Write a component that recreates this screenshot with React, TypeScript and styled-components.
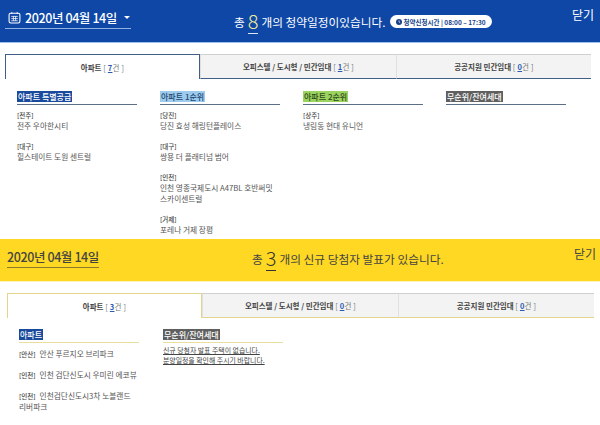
import React from "react";
import styled, { createGlobalStyle } from "styled-components";

const Global = createGlobalStyle`
  html, body { margin: 0; padding: 0; background: #fff; }
  body { font-family: "Noto Sans CJK KR", "Noto Sans", sans-serif; width: 600px; height: 425px; overflow: hidden; }
`;

const Section = styled.section<{ $h: number; $pad: number }>`
  height: ${p => p.$h}px;
  padding-left: ${p => p.$pad}px;
  box-sizing: border-box;
  overflow: hidden;
`;

const Banner = styled.header<{ $bg: string; $fg: string; $h: number; $m: number; $line: string }>`
  height: ${p => p.$h}px;
  margin-left: ${p => -p.$m}px;
  padding-left: ${p => p.$m}px;
  background: ${p => p.$bg};
  color: ${p => p.$fg};
  border-bottom: 1px solid ${p => p.$line};
  display: flex;
  align-items: flex-start;
  position: relative;
  box-sizing: border-box;
`;

const DateBox = styled.div<{ $w: number; $top: number; $line: string; $size: number }>`
  width: ${p => p.$w}px;
  height: 22px;
  margin-top: ${p => p.$top}px;
  border-bottom: 1px solid ${p => p.$line};
  display: flex;
  align-items: center;
  font-size: ${p => p.$size}px;
  font-weight: 500;
  letter-spacing: -0.4px;
  white-space: nowrap;
  box-sizing: border-box;
`;

const IconSlot = styled.span`
  display: flex;
  margin: 0 4px 0 3px;
`;

const Caret = styled.span`
  width: 0;
  height: 0;
  margin-left: 7px;
  border-left: 3px solid transparent;
  border-right: 3px solid transparent;
  border-top: 3px solid #fff;
`;

const Summary = styled.div<{ $left: number; $top: number; $size: number }>`
  margin-left: ${p => p.$left}px;
  margin-top: ${p => p.$top}px;
  display: flex;
  align-items: center;
  font-size: ${p => p.$size}px;
  white-space: nowrap;
`;

const Count = styled.span<{ $color: string; $line: string }>`
  font-size: 20px;
  line-height: 24px;
  font-weight: 300;
  color: ${p => p.$color};
  margin: 0 3px;
  border-bottom: 1px solid ${p => p.$line};
  height: 24px;
`;

const Hours = styled.span`
  margin-left: 4px;
  height: 13px;
  width: 102px;
  border-radius: 7px;
  background: #fff;
  color: #173f8a;
  font-size: 6.5px;
  font-weight: 700;
  display: flex;
  align-items: center;
  justify-content: center;
  gap: 2px;
`;

const Close = styled.span<{ $top: number; $right: number }>`
  position: absolute;
  top: ${p => p.$top}px;
  right: ${p => p.$right}px;
  font-size: 12px;
  line-height: 16px;
`;

const TabBar = styled.nav<{ $top: number; $w: number }>`
  margin-top: ${p => p.$top}px;
  width: ${p => p.$w}px;
  height: 25px;
  display: flex;
`;

const Tab = styled.div<{ $active?: boolean; $line: string; $w: number }>`
  width: ${p => p.$w}px;
  box-sizing: border-box;
  display: flex;
  align-items: center;
  justify-content: center;
  font-size: 7.5px;
  font-weight: 700;
  color: #444;
  background: ${p => (p.$active ? "#fff" : "#f3f3f3")};
  border-top: 1px solid ${p => (p.$active ? p.$line : "#cfcfcf")};
  border-left: 1px solid ${p => (p.$active ? p.$line : "#e0e0e0")};
  border-right: ${p => (p.$active ? `1px solid ${p.$line}` : "none")};
  border-bottom: ${p => (p.$active ? "none" : `1px solid ${p.$line}`)};
  white-space: pre;
`;

const Bracket = styled.span`
  font-weight: 400;
  color: #777;
  letter-spacing: 0.2px;
`;

const Num = styled.span`
  color: #2a5bb0;
  font-weight: 700;
  text-decoration: underline;
`;

const Columns = styled.div<{ $left: number; $top: number; $gap: number }>`
  display: flex;
  gap: ${p => p.$gap}px;
  margin-left: ${p => p.$left}px;
  margin-top: ${p => p.$top}px;
`;

const Column = styled.div`
  width: 120px;
`;

const TitleRow = styled.div<{ $line: string }>`
  display: flex;
  padding-bottom: 2px;
  border-bottom: 1px solid ${p => p.$line};
`;

const Badge = styled.span<{ $bg: string; $fg: string }>`
  height: 11px;
  line-height: 11px;
  padding: 0 1px;
  font-size: 8px;
  font-weight: 500;
  background: ${p => p.$bg};
  color: ${p => p.$fg};
  white-space: nowrap;
`;

const List = styled.div<{ $top: number; $gap: number }>`
  margin-top: ${p => p.$top}px;
  display: flex;
  flex-direction: column;
  gap: ${p => p.$gap}px;
`;

const Entry = styled.div`
  font-size: 7.7px;
  line-height: 11px;
  color: #555;
  word-break: keep-all;
`;

const Region = styled.div`
  font-size: 6.5px;
  line-height: 10px;
  font-weight: 500;
  color: #444;
`;

const InlineRegion = styled.span`
  font-size: 6.5px;
  line-height: 1;
  font-weight: 500;
  color: #444;
  margin-right: 4px;
`;

const Notice = styled.div`
  margin-top: 2px;
  font-size: 6.9px;
  line-height: 10px;
  color: #444;
  text-decoration: underline;
  white-space: nowrap;
`;

const CalendarIcon = () => (
  <svg width="13" height="13" viewBox="0 0 12 12" fill="none" stroke="#fff" strokeWidth="1">
    <rect x="1" y="2" width="10" height="9" rx="1.5" />
    <path d="M3.5 0.8v2M8.5 0.8v2M3 5h6M3 7h6M3 9h6M5 5v4M7 5v4" strokeWidth="0.7" />
  </svg>
);

const ClockIcon = () => (
  <svg width="6" height="6" viewBox="0 0 6 6">
    <circle cx="3" cy="3" r="3" fill="#173f8a" />
    <path d="M3 1.4V3l1.2.6" stroke="#fff" strokeWidth="0.7" fill="none" />
  </svg>
);

const TabLabel = ({ label, n }: { label: string; n: number }) => (
  <span>
    {label} <Bracket>[ <Num>{n}</Num>건 ]</Bracket>
  </span>
);

const places: [string, string[]][][] = [
  [["전주", ["전주 우아한시티"]], ["대구", ["힐스테이트 도원 센트럴"]]],
  [
    ["당진", ["당진 효성 해링턴플레이스"]],
    ["대구", ["쌍용 더 플래티넘 범어"]],
    ["인천", ["인천 영종국제도시 A47BL 호반써밋", "스카이센트럴"]],
    ["거제", ["포레나 거제 장평"]],
  ],
  [["상주", ["냉림동 현대 유니언"]]],
  [],
];

const blueTitles: [string, string, string][] = [
  ["아파트 특별공급", "#1a4a9c", "#fff"],
  ["아파트 1순위", "#9ccbee", "#23466e"],
  ["아파트 2순위", "#9bd35f", "#2f4a1a"],
  ["무순위/잔여세대", "#5f5f5f", "#fff"],
];

export default function App() {
  return (
    <>
      <Global />
      <Section $h={239} $pad={5}>
        <Banner $bg="#0e47a6" $fg="#fff" $h={43} $m={5} $line="#9cc0ee">
          <DateBox $w={126} $top={7} $line="#8fb0e0" $size={12.5}>
            <IconSlot><CalendarIcon /></IconSlot>
            2020년 04월 14일
            <Caret />
          </DateBox>
          <Summary $left={103} $top={9} $size={11.7}>
            총<Count $color="#ecec96" $line="#dfe6f2">8</Count>개의 청약일정이있습니다.
            <Hours><ClockIcon />청약신청시간 | 08:00 – 17:30</Hours>
          </Summary>
          <Close $top={7} $right={6}>닫기</Close>
        </Banner>
        <TabBar $top={11} $w={586}>
          <Tab $active $line="#3f5f85" $w={195}><TabLabel label="아파트" n={7} /></Tab>
          <Tab $line="#3f5f85" $w={196}><TabLabel label="오피스텔 / 도시형 / 민간임대" n={1} /></Tab>
          <Tab $line="#3f5f85" $w={195}><TabLabel label="공공지원 민간임대" n={0} /></Tab>
        </TabBar>
        <Columns $left={12} $top={12} $gap={23}>
          {blueTitles.map(([t, bg, fg], i) => (
            <Column key={t}>
              <TitleRow $line="#5a6f85"><Badge $bg={bg} $fg={fg}>{t}</Badge></TitleRow>
              <List $top={5} $gap={10}>
                {places[i].map(([r, names]) => (
                  <Entry key={r}>
                    <Region>[{r}]</Region>
                    {names.map(n => <div key={n}>{n}</div>)}
                  </Entry>
                ))}
              </List>
            </Column>
          ))}
        </Columns>
      </Section>
      <Section $h={186} $pad={7}>
        <Banner $bg="#fed822" $fg="#444" $h={43} $m={7} $line="#fdf3b8">
          <DateBox $w={92} $top={7} $line="#8a7a2a" $size={12.5}>
            2020년 04월 14일
          </DateBox>
          <Summary $left={153} $top={7} $size={11.7}>
            총<Count $color="#333" $line="#333">3</Count>개의 신규 당첨자 발표가 있습니다.
          </Summary>
          <Close $top={7} $right={4}>닫기</Close>
        </Banner>
        <TabBar $top={11} $w={587}>
          <Tab $active $line="#e3d48e" $w={195}><TabLabel label="아파트" n={3} /></Tab>
          <Tab $line="#e3d48e" $w={196}><TabLabel label="오피스텔 / 도시형 / 민간임대" n={0} /></Tab>
          <Tab $line="#e3d48e" $w={196}><TabLabel label="공공지원 민간임대" n={0} /></Tab>
        </TabBar>
        <Columns $left={12} $top={11} $gap={24}>
          <Column>
            <TitleRow $line="#e8df9e"><Badge $bg="#1a4a9c" $fg="#fff">아파트</Badge></TitleRow>
            <List $top={5} $gap={10}>
              <Entry><InlineRegion>[안산]</InlineRegion>안산 푸르지오 브리파크</Entry>
              <Entry><InlineRegion>[인천]</InlineRegion>인천 검단신도시 우미린 에코뷰</Entry>
              <Entry><InlineRegion>[인천]</InlineRegion>인천검단신도시3차 노블랜드 리버파크</Entry>
            </List>
          </Column>
          <Column>
            <TitleRow $line="#e8df9e"><Badge $bg="#5f5f5f" $fg="#fff">무순위/잔여세대</Badge></TitleRow>
            <Notice>신규 당첨자 발표 주택이 없습니다.<br />분양일정을 확인해 주시기 바랍니다.</Notice>
          </Column>
        </Columns>
      </Section>
    </>
  );
}
